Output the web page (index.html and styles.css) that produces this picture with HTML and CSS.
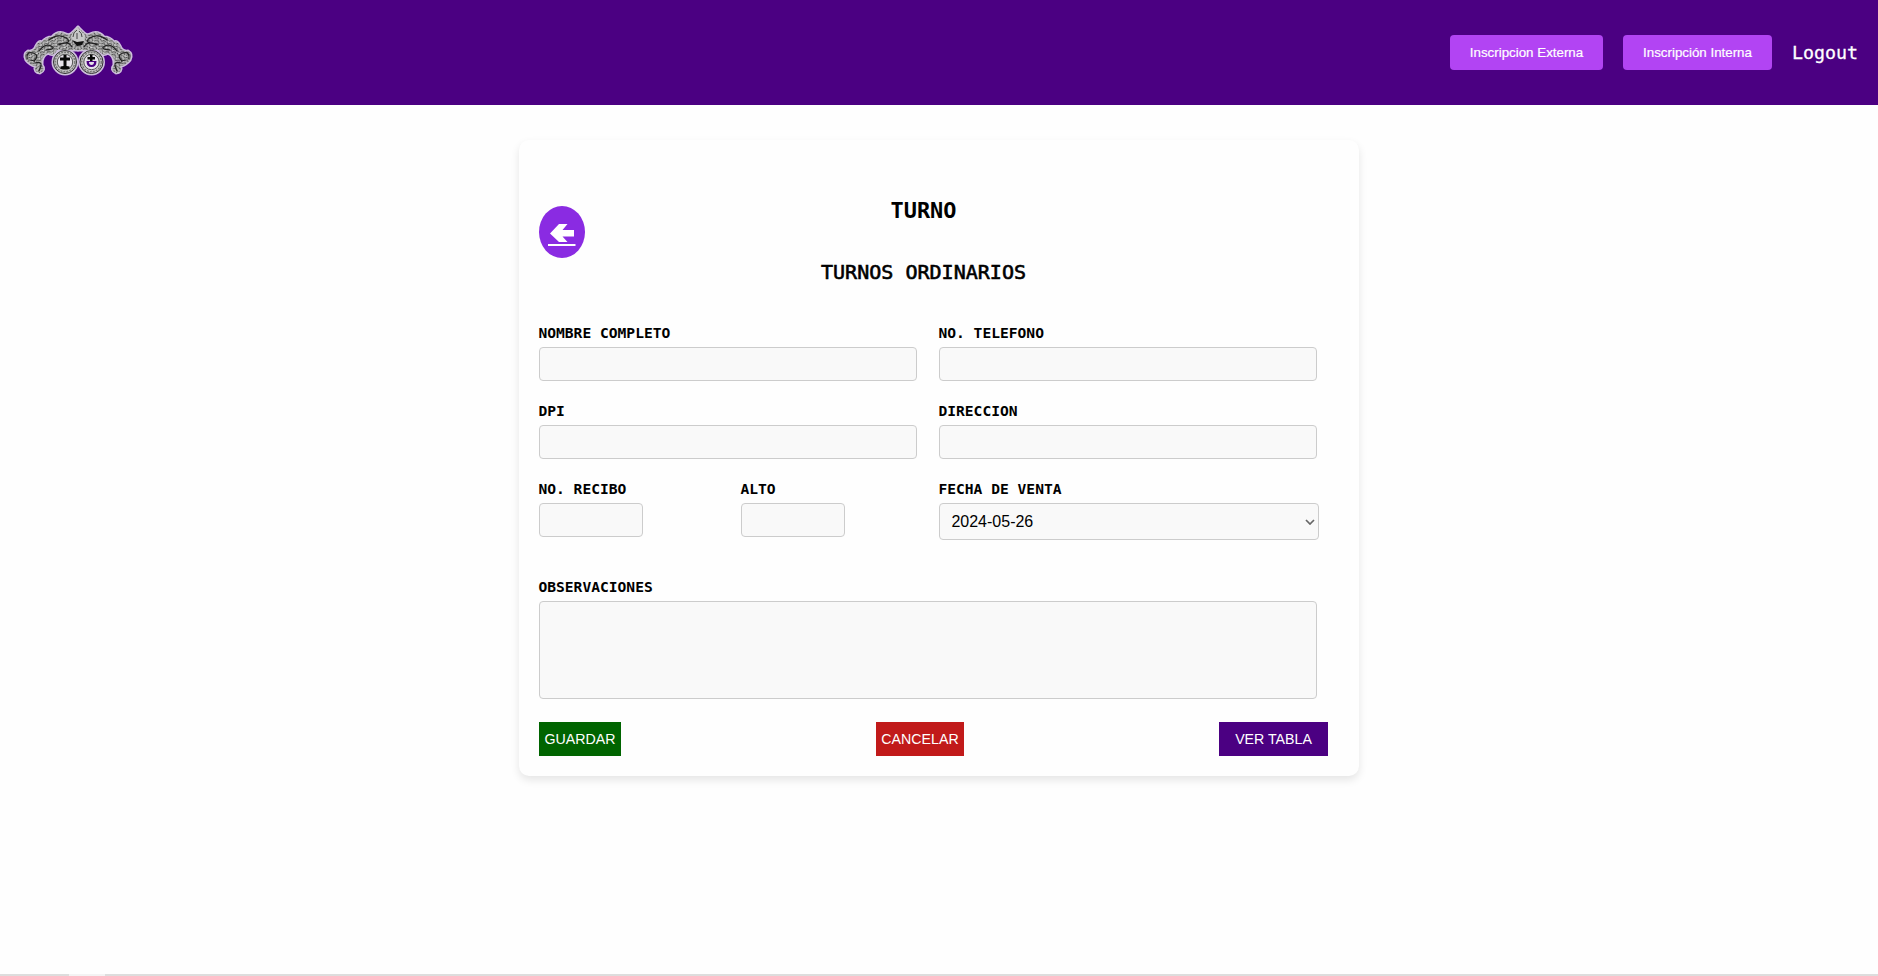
FILE: index.html
```html
<!DOCTYPE html>
<html lang="es">
<head>
<meta charset="utf-8">
<title>Turnos</title>
<link rel="stylesheet" href="styles.css">
</head>
<body>
<header class="topbar">
  <svg class="logo" viewBox="0 0 160 105" aria-label="Logo">
    <defs>
      <pattern id="lace" width="7" height="6" patternUnits="userSpaceOnUse" patternTransform="rotate(-24)">
        <path d="M0 2q2-3 4 0t3 0M1 5q2-2 3 0t3-1" fill="none" stroke="#333" stroke-width=".9"/>
        <circle cx="5" cy="3.500" r=".8" fill="#eee"/>
      </pattern>
      <path id="wing" d="M78 27 L73 32 Q69 36 66 34 Q58 30 52 37 Q46 37 42 42 Q39 40 36 46 Q34 52 28 51 Q23 54 26 60 Q30 65 35 66 Q34 73 40 73 Q46 70 42 65 Q41 56 48 53 Q54 57 57 50 L78 50Z"/>
    </defs>
    <g fill="#b9b0c6" stroke="#cdbfdc" stroke-width="3" stroke-linejoin="round">
      <use href="#wing"/><use href="#wing" transform="matrix(-1 0 0 1 156 0)"/>
      <circle cx="65" cy="62" r="12"/><circle cx="91.500" cy="62" r="12"/>
    </g>
    <g fill="#b4b4b4"><use href="#wing"/><use href="#wing" transform="matrix(-1 0 0 1 156 0)"/></g>
    <g fill="url(#lace)"><use href="#wing"/><use href="#wing" transform="matrix(-1 0 0 1 156 0)"/></g>
    <g fill="none" stroke="#222" stroke-width="1.200" stroke-linecap="round">
      <path d="M27 59q-1-8 6-6t1 8l-3-1M35 63q7-2 6 3l-2 5M39 51q6-8 12-5t-5 4M49 40q9-7 17-2t-8 6M59 45q9-5 13 2"/>
      <path d="M129 59q1-8-6-6t-1 8l3-1M121 63q-7-2-6 3l2 5M117 51q-6-8-12-5t5 4M107 40q-9-7-17-2t8 6M97 45q-9-5-13 2"/>
    </g>
    <path d="M77 27l4 4 4 4-1 7-6 2-5-3-2-5 3-5z" fill="#c8c8c8"/>
    <path d="M73 37q0-5 4-7M82 37q0-4-3-6M77 33v6" fill="none" stroke="#444"/>
    <path d="M72 40l5 2 7-1-2 4-5 1z" fill="#111"/>
    <g fill="#c4c4c4" stroke="#333" stroke-width="1">
      <circle cx="65" cy="62" r="11.500"/><circle cx="91.500" cy="62" r="11.500"/>
    </g>
    <g fill="none" stroke="#777" stroke-width="1.400" stroke-dasharray="2 1">
      <circle cx="65" cy="62" r="9.800"/><circle cx="91.500" cy="62" r="9.800"/>
    </g>
    <g fill="#e6e2ea" stroke="#444" stroke-width=".9">
      <circle cx="65" cy="62" r="7.700"/><circle cx="91.500" cy="62" r="7.700"/>
    </g>
    <path d="M63.500 55h3v2.500h3.500v3h-3.500V66l3 .5v2.500h-9v-2.500l3-.5v-5.500H60v-3h3.500z" fill="#080808"/>
    <path d="M86.500 61q0 6 5 6t5-6" fill="#4b0082"/>
    <path d="M89 62q0 3 2.500 3t2.500-3z" fill="#e6e2ea"/>
    <path d="M90 54.500h2.500v2.500H95v2.500h-2.500V61H90v-1.500h-2.500V57H90z" fill="#080808"/>
  </svg>
  <nav class="nav">
    <button class="nav-btn externa">Inscripcion Externa</button>
    <button class="nav-btn interna">Inscripción Interna</button>
    <a class="logout">Logout</a>
  </nav>
</header>
<main class="card">
  <div class="heading">
    <a class="back" aria-label="Regresar">
      <svg viewBox="0 0 46 52"><path d="M11 27.500L20 18h8.500l-5 6H35v6.500H23.500l5 5.500H20z" fill="#fff"/><path d="M9 38h27.500v2H9z" fill="#fff"/></svg>
    </a>
    <div class="titles">
      <h1>TURNO</h1>
      <h2>TURNOS ORDINARIOS</h2>
    </div>
  </div>
  <form class="form">
    <label class="field half">NOMBRE COMPLETO<input type="text"></label>
    <label class="field right">NO. TELEFONO<input type="text"></label>
    <label class="field half">DPI<input type="text"></label>
    <label class="field right">DIRECCION<input type="text"></label>
    <label class="field short">NO. RECIBO<input type="text"></label>
    <label class="field short">ALTO<input type="text"></label>
    <label class="field right">FECHA DE VENTA
      <span class="select">2024-05-26<svg viewBox="0 0 10 6"><path d="M1 1l4 4 4-4" fill="none" stroke="#666" stroke-width="1.700"/></svg></span>
    </label>
    <label class="field full">OBSERVACIONES<textarea></textarea></label>
  </form>
  <div class="actions">
    <button class="save">GUARDAR</button>
    <button class="cancel">CANCELAR</button>
    <button class="table">VER TABLA</button>
  </div>
</main>
<footer class="strip"><span></span></footer>
</body>
</html>
```
FILE: styles.css
```css
* { box-sizing: border-box; }
body {
  margin: 0;
  height: 976px;
  display: flex;
  flex-direction: column;
  overflow: hidden;
  background: #fefefe;
  color: #000;
  font-family: "DejaVu Sans Mono", monospace;
}
.topbar {
  height: 105px;
  flex: none;
  display: flex;
  justify-content: space-between;
  align-items: center;
  padding-right: 20px;
  background: #4b0082;
}
.logo { width: 160px; height: 105px; }
.nav { display: flex; align-items: center; gap: 20px; }
.nav-btn {
  height: 35px;
  padding: 0;
  border: 0;
  border-radius: 4px;
  background: #b244f3;
  color: #fff;
  font: 13.333px "Liberation Sans", Arial, sans-serif;
  -webkit-text-stroke: .2px #fff;
}
.externa { width: 153px; }
.interna { width: 149px; }
.logout {
  width: 66px;
  color: #fff;
  font-size: 18.270px;
  white-space: nowrap;
  -webkit-text-stroke: .3px #fff;
}
.card {
  width: 840px;
  height: 636px;
  flex: none;
  margin: 35px auto 0;
  padding: 51px 20px 20px;
  border-radius: 10px;
  background: #fefefe;
  box-shadow: 0 4px 8px rgba(0, 0, 0, .1);
}
.heading { display: flex; height: 132px; padding-top: 4px; }
.back {
  width: 46px;
  height: 52px;
  margin-top: 11px;
  border-radius: 50%;
  background: #8a2be2;
}
.back svg { display: block; width: 46px; height: 52px; }
.titles { flex: 1; padding: 1px 77px 0 0; text-align: center; }
.titles h1 { margin: 0 0 31px; font-size: 21.920px; line-height: 30px; }
.titles h2 {
  margin: 0;
  font-size: 20.050px;
  line-height: 30px;
  font-weight: 400;
  -webkit-text-stroke: .6px #000;
}
.form {
  display: grid;
  grid-template-columns: 202px 198px 380px;
  grid-template-rows: 78px 78px 98px 137px;
}
.field { font-size: 14.620px; font-weight: 700; line-height: 20px; text-indent: -.6px; }
.half { grid-column: 1 / 3; }
.right { grid-column: 3; }
.full { grid-column: 1 / -1; }
.field input, .field textarea, .select {
  display: block;
  height: 34px;
  margin: 4px 0 0;
  border: 1px solid #ccc;
  border-radius: 4px;
  background: #f9f9f9;
  outline: 0;
}
.half input, .right input { width: 378px; }
.short input { width: 104px; }
.field textarea { width: 778px; height: 98px; resize: none; }
.select {
  display: flex;
  align-items: center;
  justify-content: space-between;
  width: 380px;
  height: 37px;
  padding: 0 3px 0 12px;
  font: 16px "Liberation Sans", Arial, sans-serif;
}
.select svg { width: 10px; height: 6px; }
.actions { display: flex; justify-content: space-between; padding-right: 11px; margin-top: 8px; }
.actions button {
  height: 34px;
  padding: 0;
  border: 0;
  color: #fff;
  font: 14.200px "Liberation Sans", Arial, sans-serif;
}
.actions .save { width: 82px; background: #006400; }
.actions .cancel { width: 88px; background: #c11a1a; }
.actions .table { width: 109px; background: #4b0082; }
.strip { height: 2px; margin-top: auto; padding-left: 69px; background: #ddd; }
.strip span { display: block; width: 36px; height: 2px; background: #f3f3f3; }
```
